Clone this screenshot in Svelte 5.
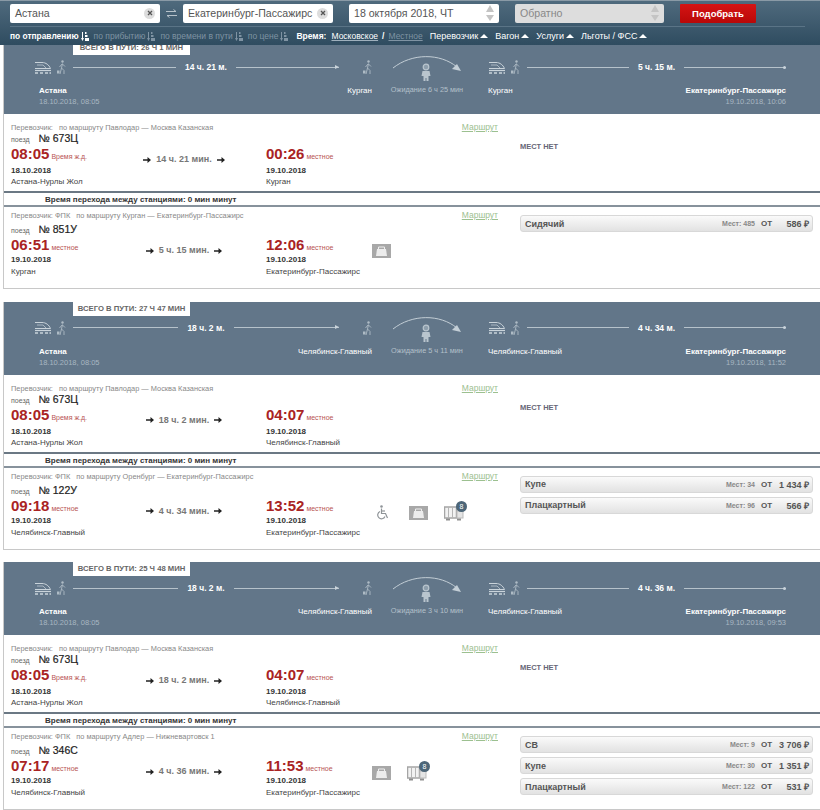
<script>
	const sorts = [
		{ label: 'по отправлению', active: true },
		{ label: 'по прибытию' },
		{ label: 'по времени в пути' },
		{ label: 'по цене' }
	];
	const filters = ['Перевозчик', 'Вагон', 'Услуги', 'Льготы / ФСС'];

	const trips = [
		{
			total: '26 Ч 1 МИН',
			from: 'Астана',
			fromDate: '18.10.2018, 08:05',
			to: 'Екатеринбург-Пассажирс',
			toDate: '19.10.2018, 10:06',
			via: 'Курган',
			leg1: '14 ч. 21 м.',
			leg2: '5 ч. 15 м.',
			wait: 'Ожидание 6 ч 25 мин',
			segments: [
				{
					carrier: 'Перевозчик:',
					route: 'по маршруту Павлодар — Москва Казанская',
					train: '№ 673Ц',
					depTime: '08:05',
					depNote: 'Время ж.д.',
					depDate: '18.10.2018',
					depStation: 'Астана-Нурлы Жол',
					duration: '14 ч. 21 мин.',
					arrTime: '00:26',
					arrDate: '19.10.2018',
					arrStation: 'Курган',
					icons: [],
					seats: []
				},
				{
					carrier: 'Перевозчик: ФПК',
					route: 'по маршруту Курган — Екатеринбург-Пассажирс',
					train: '№ 851У',
					depTime: '06:51',
					depNote: 'местное',
					depDate: '19.10.2018',
					depStation: 'Курган',
					duration: '5 ч. 15 мин.',
					arrTime: '12:06',
					arrDate: '19.10.2018',
					arrStation: 'Екатеринбург-Пассажирс',
					icons: ['bag'],
					seats: [{ name: 'Сидячий', count: 485, price: '586' }]
				}
			]
		},
		{
			total: '27 Ч 47 МИН',
			from: 'Астана',
			fromDate: '18.10.2018, 08:05',
			to: 'Екатеринбург-Пассажирс',
			toDate: '19.10.2018, 11:52',
			via: 'Челябинск-Главный',
			leg1: '18 ч. 2 м.',
			leg2: '4 ч. 34 м.',
			wait: 'Ожидание 5 ч 11 мин',
			segments: [
				{
					carrier: 'Перевозчик:',
					route: 'по маршруту Павлодар — Москва Казанская',
					train: '№ 673Ц',
					depTime: '08:05',
					depNote: 'Время ж.д.',
					depDate: '18.10.2018',
					depStation: 'Астана-Нурлы Жол',
					duration: '18 ч. 2 мин.',
					arrTime: '04:07',
					arrDate: '19.10.2018',
					arrStation: 'Челябинск-Главный',
					icons: [],
					seats: []
				},
				{
					carrier: 'Перевозчик: ФПК',
					route: 'по маршруту Оренбург — Екатеринбург-Пассажирс',
					train: '№ 122У',
					depTime: '09:18',
					depNote: 'местное',
					depDate: '19.10.2018',
					depStation: 'Челябинск-Главный',
					duration: '4 ч. 34 мин.',
					arrTime: '13:52',
					arrDate: '19.10.2018',
					arrStation: 'Екатеринбург-Пассажирс',
					icons: ['wheelchair', 'bag', 'wagon'],
					seats: [
						{ name: 'Купе', count: 34, price: '1 434' },
						{ name: 'Плацкартный', count: 96, price: '566' }
					]
				}
			]
		},
		{
			total: '25 Ч 48 МИН',
			from: 'Астана',
			fromDate: '18.10.2018, 08:05',
			to: 'Екатеринбург-Пассажирс',
			toDate: '19.10.2018, 09:53',
			via: 'Челябинск-Главный',
			leg1: '18 ч. 2 м.',
			leg2: '4 ч. 36 м.',
			wait: 'Ожидание 3 ч 10 мин',
			segments: [
				{
					carrier: 'Перевозчик:',
					route: 'по маршруту Павлодар — Москва Казанская',
					train: '№ 673Ц',
					depTime: '08:05',
					depNote: 'Время ж.д.',
					depDate: '18.10.2018',
					depStation: 'Астана-Нурлы Жол',
					duration: '18 ч. 2 мин.',
					arrTime: '04:07',
					arrDate: '19.10.2018',
					arrStation: 'Челябинск-Главный',
					icons: [],
					seats: []
				},
				{
					carrier: 'Перевозчик: ФПК',
					route: 'по маршруту Адлер — Нижневартовск 1',
					train: '№ 346С',
					depTime: '07:17',
					depNote: 'местное',
					depDate: '19.10.2018',
					depStation: 'Челябинск-Главный',
					duration: '4 ч. 36 мин.',
					arrTime: '11:53',
					arrDate: '19.10.2018',
					arrStation: 'Екатеринбург-Пассажирс',
					icons: ['bag', 'wagon'],
					seats: [
						{ name: 'СВ', count: 9, price: '3 706' },
						{ name: 'Купе', count: 30, price: '1 351' },
						{ name: 'Плацкартный', count: 122, price: '531' }
					]
				}
			]
		}
	];
</script>

{#snippet clearBtn()}
	<span class="clear">
		<svg width="6" height="6" viewBox="0 0 6 6"><path d="M1 1l4 4M5 1L1 5" stroke="#555" stroke-width="1.3" /></svg>
	</span>
{/snippet}

{#snippet spinner()}
	<svg class="spin" width="8" height="17" viewBox="0 0 8 17">
		<path d="M4 0l4 7H0z" fill="#c4c4c4" />
		<path d="M0 10h8l-4 6z" fill="#c4c4c4" />
	</svg>
{/snippet}

{#snippet sortIcon(active)}
	<svg width="8" height="9" viewBox="0 0 8 9" fill={active ? '#fff' : '#7f93a3'}>
		<path d="M1 0h1v6h1L1.500 9 0 6h1z" />
		<path d="M4 0h1.500v2H4zM4 3h2.500v2H4zM4 6h4v3H4z" />
	</svg>
{/snippet}

{#snippet trainIcon()}
	<svg class="train-icon" width="18" height="15" viewBox="0 0 18 15" fill="none" stroke="#c9d3da">
		<path d="M1 2.500h7c4 0 7 2.500 8.500 6H1" />
		<path d="M3 5h6l3.500 3.500" stroke-width=".7" />
		<path d="M1 10.500h16" stroke-width="1.200" />
		<path d="M1 13h3M6 13h3M11 13h3M15.500 13h1.500" stroke-width="1.500" />
	</svg>
{/snippet}

{#snippet walker()}
	<svg class="walker" width="9" height="14" viewBox="0 0 9 14" fill="none" stroke="#aebbc5" stroke-width=".9">
		<circle cx="5.500" cy="1.500" r="1.200" fill="#aebbc5" stroke="none" />
		<path d="M5.500 3.500L4.500 8l2.500 2.500V14M4.500 8L3 14M5.500 4l2.500 2.500M5 4L2.500 7" />
		<rect x="0" y="10.500" width="2.500" height="3" fill="#aebbc5" stroke="none" />
	</svg>
{/snippet}

{#snippet bag()}
	<svg width="19" height="14" viewBox="0 0 19 14">
		<rect width="19" height="14" fill="#a8a8a8" />
		<path d="M6.500 5V3h6v2" fill="none" stroke="#eee" />
		<path d="M5 5h9l1 7H4z" fill="#ececec" />
	</svg>
{/snippet}

{#snippet wheelchair()}
	<svg class="chair" width="12" height="15" viewBox="0 0 12 15" fill="none" stroke="#8f9498" stroke-width="1.200">
		<circle cx="4.500" cy="1.500" r="1.300" fill="#8f9498" stroke="none" />
		<path d="M4.500 3.500v5h4l2 4.500" />
		<path d="M4.500 6h3.500" />
		<path d="M3 6.500a3.800 3.800 0 1 0 5 5" />
	</svg>
{/snippet}

{#snippet wagon()}
	<span class="wagon">
		<svg width="20" height="16" viewBox="0 0 20 16" fill="none">
			<rect x="0.500" y="2" width="12" height="11" fill="#f2f2f2" stroke="#a5a5a5" stroke-width="1.500" />
			<path d="M4.500 2v11M8.500 2v11" stroke="#b5b5b5" />
			<rect x="13" y="6" width="6" height="7" fill="#e4e4e4" stroke="#bbb" />
			<path d="M2 14.500h4M13 14.500h4" stroke="#8f8f8f" stroke-width="2" />
		</svg>
		<span class="badge">8</span>
	</span>
{/snippet}

{#snippet arrow()}
	<svg width="8" height="6" viewBox="0 0 8 6"><path d="M0 2.200h4.500V0L8 3 4.500 6V3.800H0z" fill="#222" /></svg>
{/snippet}

{#snippet leg(label, ending)}
	<div class="line" class:arrow={ending === 'arrow'} class:dot={ending === 'dot'}>
		<span class="rule"></span>
		<b>{label}</b>
		<span class="rule last"></span>
	</div>
{/snippet}

<div class="page">
	<header class="search">
		<div class="fields">
			<div class="field from">Астана {@render clearBtn()}</div>
			<svg class="swap" width="11" height="9" viewBox="0 0 11 9" fill="none" stroke="#b7c2ca">
				<path d="M0 2.500h10M7.500 .5l2.500 2M11 6.500H1M3.500 8.500L1 6.500" />
			</svg>
			<div class="field to">Екатеринбург-Пассажирс {@render clearBtn()}</div>
			<div class="field date">18 октября 2018, ЧТ {@render spinner()}</div>
			<div class="field back">Обратно {@render spinner()}</div>
			<button class="go">Подобрать</button>
		</div>
		<nav class="filters">
			{#each sorts as s}
				<span class="sort" class:active={s.active}>{s.label} {@render sortIcon(s.active)}</span>
			{/each}
			<span class="time">Время:</span>
			<span class="time-a">Московское</span>
			<span class="slash">/</span>
			<span class="time-b">Местное</span>
			{#each filters as f}
				<span class="filter">{f}<i></i></span>
			{/each}
		</nav>
	</header>

	<main class="trips">
		{#each trips as trip}
			<article class="trip">
				<div class="hero">
					<div class="total">ВСЕГО В ПУТИ: {trip.total}</div>
					<div class="leg first">
						<div class="leg-top">
							{@render trainIcon()}
							{@render walker()}
							{@render leg(trip.leg1, 'arrow')}
							<span class="end-walker">{@render walker()}</span>
						</div>
						<div class="leg-names">
							<div>
								<strong>{trip.from}</strong>
								<small>{trip.fromDate}</small>
							</div>
							<span class="via">{trip.via}</span>
						</div>
					</div>
					<div class="wait">
						<svg width="70" height="26" viewBox="0 0 70 26" fill="none" stroke="#c3ced6">
							<path d="M1 12C20 -3 48 -3 65 11" />
							<path d="M69 15l-9-2 5-5z" fill="#c3ced6" stroke="none" />
							<circle cx="34" cy="11" r="2.800" fill="#8d9eac" stroke="#b9c5ce" stroke-width="1.200" />
							<path d="M30.500 15h7l1 5h-2v5h-2v-3h-1v3h-2v-5h-2z" fill="#b9c5ce" stroke="none" />
						</svg>
						<span>{trip.wait}</span>
					</div>
					<div class="leg second">
						<div class="leg-top">
							{@render trainIcon()}
							{@render walker()}
							{@render leg(trip.leg2, 'dot')}
						</div>
						<div class="leg-names">
							<span class="via">{trip.via}</span>
							<div class="right">
								<strong>{trip.to}</strong>
								<small>{trip.toDate}</small>
							</div>
						</div>
					</div>
				</div>

				{#each trip.segments as seg, i}
					{#if i > 0}
						<div class="transfer">Время перехода между станциями: 0 мин минут</div>
					{/if}
					<section class="seg" class:last={i > 0}>
						<div class="info">
							<div class="meta">
								<span>{seg.carrier}<span class="route">{seg.route}</span></span>
								<a href="#route">Маршрут</a>
							</div>
							<div class="train"><small>поезд</small><span>{seg.train}</span></div>
							<div class="times">
								<div>
									<div class="clock"><b>{seg.depTime}</b> {seg.depNote}</div>
									<div class="day">{seg.depDate}</div>
									<div class="station">{seg.depStation}</div>
								</div>
								<div class="duration">
									{@render arrow()}<span>{seg.duration}</span>{@render arrow()}
								</div>
								<div class="arrive">
									<div class="clock"><b>{seg.arrTime}</b> местное</div>
									<div class="day">{seg.arrDate}</div>
									<div class="station">{seg.arrStation}</div>
								</div>
								<div class="icons">
									{#each seg.icons as ic}
										{#if ic === 'bag'}{@render bag()}
										{:else if ic === 'wheelchair'}{@render wheelchair()}
										{:else}{@render wagon()}{/if}
									{/each}
								</div>
							</div>
						</div>
						<div class="seats">
							{#each seg.seats as s}
								<div class="seat">
									<span class="name">{s.name}</span>
									<span class="count">Мест: {s.count}</span>
									<span class="ot">ОТ</span>
									<span class="price">{s.price} ₽</span>
								</div>
							{:else}
								<div class="none">МЕСТ НЕТ</div>
							{/each}
						</div>
					</section>
				{/each}
			</article>
		{/each}
	</main>
</div>

<style>
	:global(body) {
		margin: 0;
		background: #fff;
		font-family: 'Liberation Sans', Arial, sans-serif;
	}

	.page {
		position: relative;
		width: 820px;
		height: 810px;
		overflow: hidden;
		font-size: 8px;
		color: #444;
	}

	.search {
		position: absolute;
		top: 0;
		left: 0;
		right: 0;
		height: 45px;
		z-index: 2;
		background: linear-gradient(#4f6a7d, #2f4c60);
		border-top: 1px solid #8a9aa6;
		box-sizing: border-box;
	}

	.fields {
		display: flex;
		align-items: center;
		height: 20px;
		margin-top: 2px;
		padding-left: 10px;
	}

	.field {
		display: flex;
		align-items: center;
		justify-content: space-between;
		box-sizing: border-box;
		width: 150px;
		height: 19px;
		padding: 0 5px;
		background: #fff;
		border-radius: 2px;
		font-size: 10.600px;
		color: #555;
		white-space: nowrap;
	}

	.clear {
		display: flex;
		align-items: center;
		justify-content: center;
		width: 11px;
		height: 11px;
		border-radius: 50%;
		background: #ddd;
	}

	.swap {
		margin: 0 6px;
	}

	.to {
		margin-right: 16px;
	}

	.back {
		margin-left: 16px;
		background: #ddd;
		color: #888;
		width: 149px;
	}

	.go {
		margin-left: 16px;
		width: 76px;
		height: 19px;
		border: 0;
		border-radius: 1px;
		padding: 0;
		background: linear-gradient(#d51414, #b90808);
		color: #fff;
		font: bold 9.500px 'Liberation Sans', Arial, sans-serif;
	}

	.filters {
		display: flex;
		align-items: center;
		height: 18px;
		margin: 3px 15px 0 10px;
		border-top: 1px solid #5a7486;
		font-size: 8.500px;
		color: #7f93a3;
		white-space: nowrap;
	}

	.sort {
		margin-right: 5px;
		display: flex;
		align-items: center;
		gap: 2px;
	}

	.sort.active {
		color: #fff;
		font-size: 8.400px;
		font-weight: bold;
	}

	.time {
		margin-left: 3px;
		font-weight: bold;
		color: #fff;
	}

	.time-a {
		margin-left: 5px;
		color: #fff;
		text-decoration: underline;
		text-decoration-color: #9fb0bd;
	}

	.slash {
		margin: 0 4px;
		color: #fff;
		font-weight: bold;
	}

	.time-b {
		text-decoration: underline;
		margin-right: 7px;
	}

	.filter {
		display: flex;
		align-items: center;
		margin-right: 7px;
		color: #fff;
		font-size: 9px;
	}

	.filter i {
		margin-left: 2px;
		border: 4px solid transparent;
		border-top: 0;
		border-bottom: 4px solid #fff;
	}

	.trips {
		display: flex;
		flex-direction: column;
		gap: 12.500px;
		padding: 41px 0 0 3px;
	}

	.trip {
		border-left: 1px solid #c8c8c8;
		border-bottom: 1px solid #c8c8c8;
	}

	.hero {
		position: relative;
		display: flex;
		height: 73px;
		background: #627689;
		color: #fff;
	}

	.total {
		position: absolute;
		top: 0;
		left: 69px;
		width: 117px;
		height: 14px;
		line-height: 13px;
		text-align: center;
		background: #fff;
		color: #666;
		font-size: 7.700px;
		font-weight: bold;
	}

	.leg-top {
		display: flex;
		align-items: center;
		height: 16px;
		margin-top: 18px;
	}

	.train-icon {
		flex: none;
	}

	.walker {
		flex: none;
		margin-left: 5px;
	}

	.end-walker {
		display: flex;
		margin-left: 19px;
	}

	.leg.first {
		width: 338px;
		margin-left: 30px;
	}

	.leg.second {
		width: 298px;
	}

	.line {
		flex: 1;
		display: flex;
		align-items: center;
		margin-left: 7px;
		gap: 9px;
	}

	.line b {
		font-size: 8.500px;
		color: #fff;
		white-space: nowrap;
	}

	.rule {
		flex: 1;
		height: 1px;
		background: #b6c2cb;
		position: relative;
	}

	.arrow .last::after {
		content: '';
		position: absolute;
		right: 0;
		top: -2px;
		border-left: 4px solid #c9d3da;
		border-top: 2.500px solid transparent;
		border-bottom: 2.500px solid transparent;
	}

	.dot .last::after {
		content: '';
		position: absolute;
		right: 0;
		top: -1px;
		width: 3px;
		height: 3px;
		border-radius: 50%;
		background: #c9d3da;
	}

	.leg-names {
		display: flex;
		justify-content: space-between;
		align-items: flex-start;
		margin-top: 10px;
		line-height: 11px;
	}

	.leg.first .leg-names {
		padding: 0 0 0 5px;
	}

	.leg-names strong {
		display: block;
		font-size: 8px;
	}

	.leg-names small {
		display: block;
		font-size: 7.500px;
		color: #a9b7c2;
	}

	.via {
		font-size: 8px;
	}

	.right {
		text-align: right;
	}

	.wait {
		width: 110px;
		display: flex;
		flex-direction: column;
		align-items: center;
		padding-top: 15px;
		margin-right: 6px;
		color: #b3c0ca;
		font-size: 7.300px;
		white-space: nowrap;
	}

	.wait span {
		margin-top: 3px;
	}

	.seg {
		display: flex;
		height: 77px;
		box-sizing: border-box;
	}

	.seg.last {
		height: 81px;
	}

	.info {
		box-sizing: border-box;
		width: 494px;
		padding: 9px 0 0 7px;
	}

	.last .info {
		padding-top: 4px;
	}

	.meta {
		display: flex;
		justify-content: space-between;
		font-size: 7.400px;
		line-height: 9px;
		height: 9px;
		color: #888;
	}

	.route {
		margin-left: 6px;
	}

	.meta a {
		color: #9cc090;
		font-size: 8.500px;
	}

	.train {
		display: flex;
		align-items: baseline;
		gap: 9px;
		height: 13px;
		line-height: 13px;
		font-size: 10.500px;
		color: #222;
		-webkit-text-stroke: 0.2px #222;
	}

	.last .train {
		margin-top: 3px;
	}

	.train small {
		font-size: 7px;
		color: #666;
		-webkit-text-stroke: 0;
	}

	.times {
		display: grid;
		grid-template-columns: 129px 88px 144px auto;
		align-items: start;
	}

	.clock {
		display: flex;
		align-items: baseline;
		gap: 2px;
		height: 17px;
		color: #b85454;
		font-size: 7px;
		white-space: nowrap;
	}

	.clock b {
		font-size: 15px;
		line-height: 17px;
		color: #a92323;
	}

	.day {
		margin-top: 3px;
		line-height: 11px;
		font-weight: bold;
		color: #333;
	}

	.last .day {
		margin-top: 1px;
	}

	.station {
		line-height: 11px;
		color: #444;
	}

	.last .station {
		line-height: 13px;
	}

	.duration {
		display: flex;
		align-items: center;
		justify-content: center;
		gap: 5px;
		margin-top: 9px;
		line-height: 11px;
		font-size: 9px;
		font-weight: bold;
		color: #777;
		white-space: nowrap;
	}

	.arrive {
		margin-left: 38px;
	}

	.icons {
		display: flex;
		align-items: center;
		gap: 16px;
		margin-top: 8px;
	}

	.chair {
		margin: 0 4px 0 5px;
	}

	.wagon {
		position: relative;
		display: flex;
	}

	.badge {
		position: absolute;
		top: -4px;
		right: -3px;
		width: 11px;
		height: 11px;
		line-height: 11px;
		text-align: center;
		border-radius: 50%;
		background: #4d6678;
		color: #fff;
		font-size: 7px;
	}

	.seats {
		flex: 1;
		display: flex;
		flex-direction: column;
		gap: 4px;
		margin: 8px 7px 0 22px;
	}

	.seat {
		display: flex;
		align-items: center;
		box-sizing: border-box;
		height: 17px;
		padding: 0 3px 0 4px;
		border: 1px solid #d8d8d8;
		border-radius: 3px;
		background: linear-gradient(#fafafa, #e2e2e2);
		color: #555;
		font-weight: bold;
	}

	.name {
		flex: 1;
		font-size: 9px;
	}

	.count {
		font-size: 7px;
		color: #888;
	}

	.ot {
		margin-left: 6px;
		width: 10px;
		font-size: 8px;
	}

	.price {
		width: 38px;
		text-align: right;
		font-size: 9px;
	}

	.none {
		margin-top: 20px;
		font-size: 7.500px;
		font-weight: bold;
		color: #667;
	}

	.transfer {
		box-sizing: border-box;
		height: 16px;
		line-height: 13px;
		padding-left: 41px;
		border-top: 2px solid #6b7884;
		border-bottom: 2px solid #87929c;
		font-size: 8px;
		font-weight: bold;
		color: #333;
	}
</style>
